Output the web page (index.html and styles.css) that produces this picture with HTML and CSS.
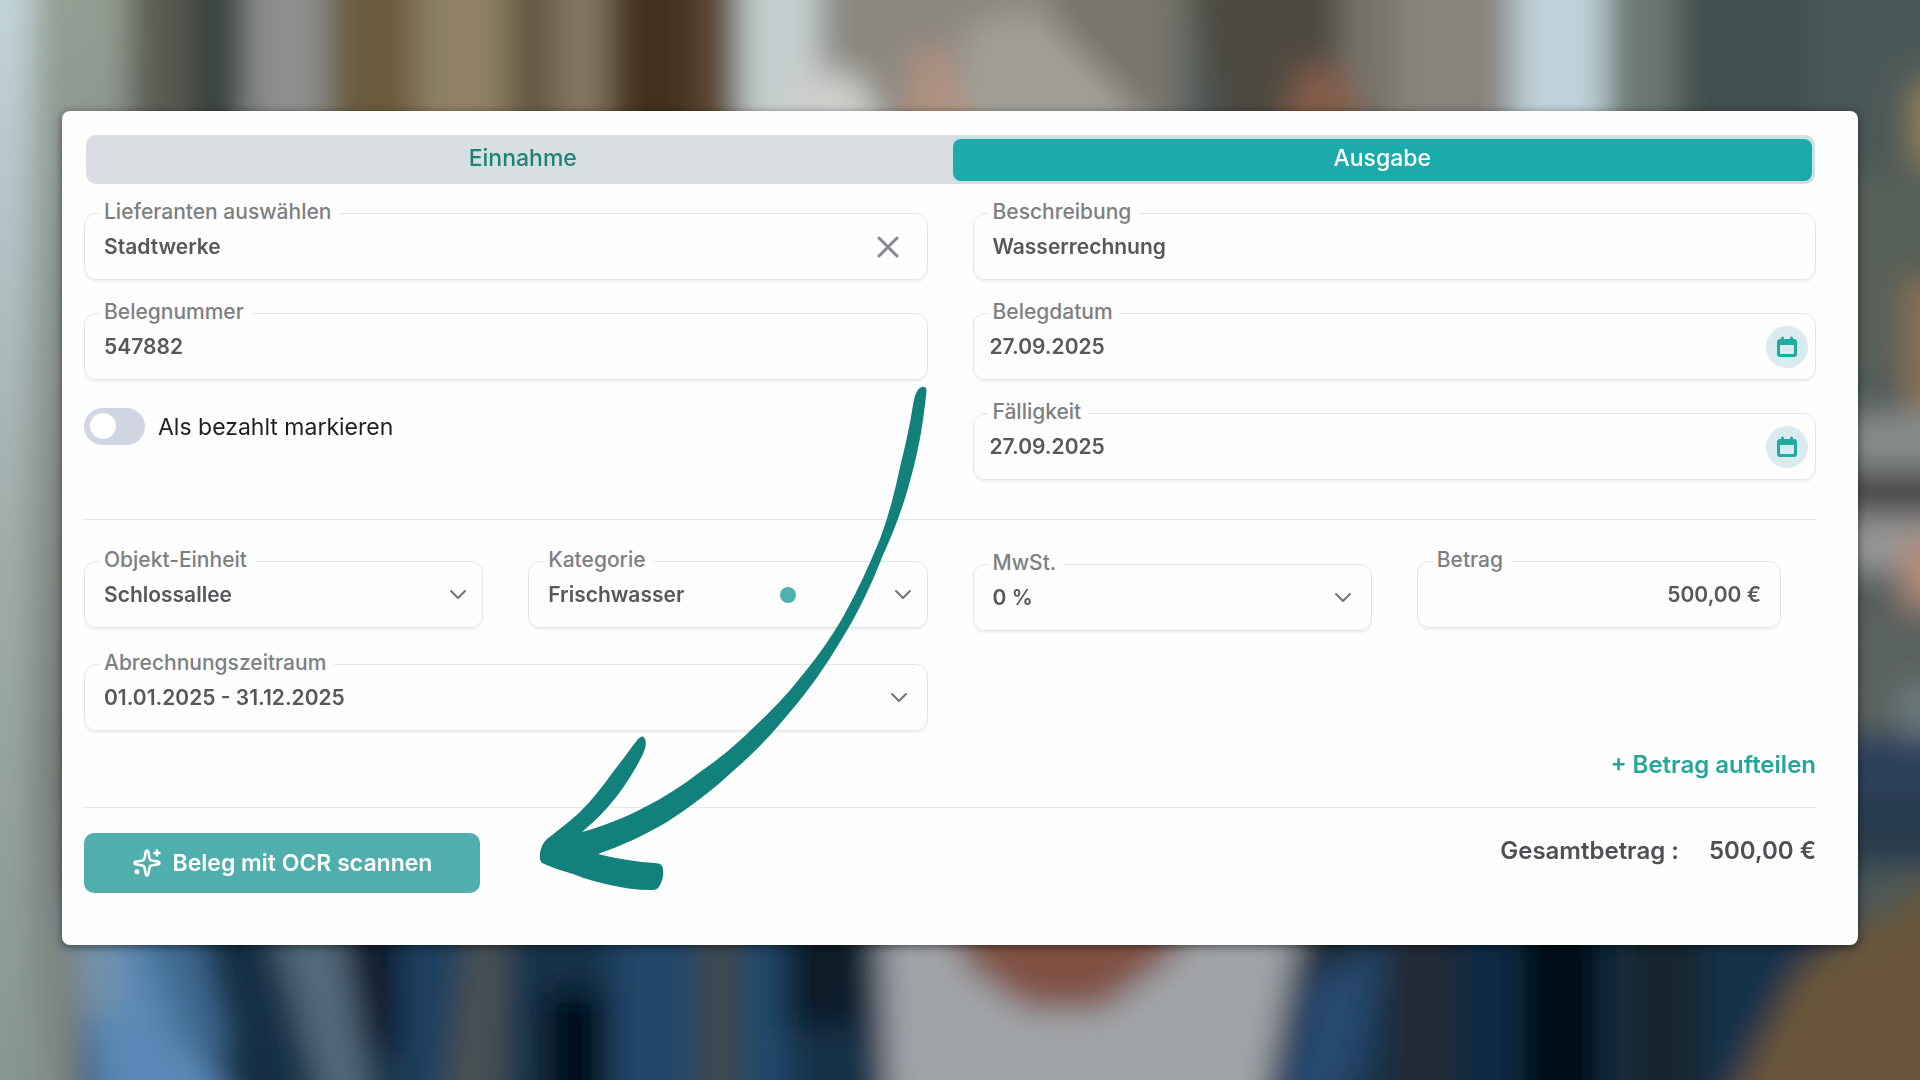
FILE: index.html
```
<!DOCTYPE html>
<html lang="de">
<head>
  <meta charset="UTF-8">
  <meta name="viewport" content="width=device-width, initial-scale=1">
  <title>Beleg erfassen</title>
  <link rel="stylesheet" href="styles.css">
</head>
<body>

  <svg class="backdrop" viewBox="0 0 1568 882" preserveAspectRatio="none" aria-hidden="true">
    <defs>
      <filter id="soft" x="-10%" y="-10%" width="120%" height="120%">
        <feGaussianBlur stdDeviation="13"/>
      </filter>
      <linearGradient id="wall" x1="0" y1="0" x2="0" y2="1">
        <stop offset="0" stop-color="#c6dae0"/>
        <stop offset="0.5" stop-color="#a0adab"/>
        <stop offset="1" stop-color="#84948f"/>
      </linearGradient>
      <linearGradient id="curtain" x1="0" y1="0" x2="0" y2="1">
        <stop offset="0" stop-color="#98a195"/>
        <stop offset="0.3" stop-color="#87918c"/>
        <stop offset="0.7" stop-color="#757a74"/>
        <stop offset="1" stop-color="#848e8a"/>
      </linearGradient>
    </defs>
    <rect width="1568" height="882" fill="#4b5858"/>
    <g filter="url(#soft)">
      <!-- curtains and shelf -->
      <rect x="-60" y="-60" width="88" height="1000" fill="url(#wall)"/>
      <rect x="28" y="-60" width="80" height="1000" fill="url(#curtain)"/>
      <rect x="105" y="-60" width="52" height="400" fill="#5a5b53"/>
      <rect x="155" y="-60" width="47" height="400" fill="#39433d"/>
      <rect x="200" y="-60" width="68" height="400" fill="#8c8f8b"/>
      <rect x="268" y="-60" width="72" height="400" fill="#6b5c3e"/>
      <rect x="340" y="-60" width="74" height="400" fill="#908165"/>
      <rect x="414" y="-60" width="40" height="400" fill="#625844"/>
      <rect x="454" y="-60" width="44" height="400" fill="#84775f"/>
      <rect x="498" y="-60" width="70" height="400" fill="#42331a"/>
      <rect x="568" y="-60" width="36" height="400" fill="#5f4a30"/>
      <rect x="604" y="-60" width="66" height="400" fill="#c4cfcf"/>
      <!-- head -->
      <rect x="670" y="-60" width="200" height="400" fill="#8b8780"/>
      <rect x="860" y="-60" width="110" height="400" fill="#77746c"/>
      <polygon points="790,20 850,10 900,60 960,130 780,130" fill="#a19f98"/>
      <polygon points="650,60 700,60 735,130 640,130" fill="#cfcfcc"/>
      <polygon points="745,40 775,40 800,130 735,130" fill="#b0917f"/>
      <polygon points="965,-60 1095,-60 1120,130 1000,130" fill="#4d4841"/>
      <rect x="1095" y="-60" width="50" height="400" fill="#77736b"/>
      <rect x="1140" y="-60" width="92" height="400" fill="#88847b"/>
      <polygon points="1060,55 1100,55 1125,140 1040,140" fill="#835d4a"/>
      <rect x="1234" y="-60" width="78" height="400" fill="#c0d2da"/>
      <rect x="1312" y="-60" width="57" height="400" fill="#6b7872"/>
      <rect x="1369" y="-60" width="110" height="400" fill="#43504f"/>
      <!-- right edge -->
      <polygon points="1560,70 1640,50 1640,150 1560,130" fill="#9c8557"/>
      <rect x="1500" y="140" width="140" height="170" fill="#566059"/>
      <rect x="1555" y="230" width="85" height="110" fill="#8d7052"/>
      <rect x="1500" y="335" width="140" height="50" fill="#858b89"/>
      <rect x="1500" y="388" width="140" height="30" fill="#3d3635"/>
      <rect x="1500" y="420" width="140" height="50" fill="#949695"/>
      <rect x="1552" y="440" width="90" height="60" fill="#b58b78"/>
      <rect x="1500" y="495" width="140" height="100" fill="#5a625f"/>
      <rect x="1550" y="560" width="90" height="60" fill="#6d7b80"/>
      <rect x="1500" y="600" width="140" height="60" fill="#29405a"/>
      <rect x="1500" y="655" width="140" height="50" fill="#253b4b"/>
      <!-- checked shirt -->
      <rect x="64" y="700" width="1440" height="240" fill="#17304a"/>
      <polygon points="56,730 104,730 215,960 86,960" fill="#5a88b6"/>
      <polygon points="60,730 98,730 98,830 68,830" fill="#7593a8"/>
      <polygon points="105,730 155,730 195,860 150,860" fill="#3f6a92"/>
      <polygon points="155,730 200,730 250,960 210,960" fill="#142d45"/>
      <polygon points="215,730 275,730 312,960 282,960" fill="#526a7c"/>
      <polygon points="275,730 325,730 325,860 300,860" fill="#0b1826"/>
      <polygon points="325,730 420,730 415,960 330,960" fill="#1e3f5f"/>
      <polygon points="385,730 415,730 410,960 355,960" fill="#4a5152"/>
      <rect x="445" y="810" width="50" height="150" fill="#020d17"/>
      <rect x="500" y="730" width="70" height="230" fill="#204669"/>
      <rect x="570" y="730" width="33" height="230" fill="#414c4e"/>
      <rect x="605" y="730" width="38" height="230" fill="#23496c"/>
      <rect x="640" y="730" width="65" height="110" fill="#0f1d26"/>
      <polygon points="718,730 1066,730 1020,960 728,960" fill="#a0a4a9"/>
      <polygon points="755,710 988,710 960,780 900,825 840,825 790,790" fill="#805142"/>
      <polygon points="1072,730 1140,730 1110,780 1066,800" fill="#1f2b33"/>
      <polygon points="1070,800 1130,770 1110,880 1030,960" fill="#274a6e"/>
      <rect x="1135" y="730" width="55" height="230" fill="#202a34"/>
      <rect x="1190" y="730" width="45" height="230" fill="#112b45"/>
      <rect x="1240" y="730" width="70" height="230" fill="#020f15"/>
      <rect x="1325" y="730" width="65" height="230" fill="#18282f"/>
      <polygon points="1640,680 1540,745 1470,790 1380,960 1640,960" fill="#69573a"/>
    </g>
  </svg>

  <main class="card">
    <form>
      <div class="tabs">
        <button type="button" class="tab">Einnahme</button>
        <button type="button" class="tab active">Ausgabe</button>
      </div>

      <div class="columns">
        <div class="column">
          <div class="field">
            <label for="supplier">Lieferanten auswählen</label>
            <input type="text" id="supplier" value="Stadtwerke">
            <button type="button" class="clear" aria-label="Auswahl löschen">
              <svg width="22" height="22" viewBox="0 0 22 22"><path d="M2 2l18 18M20 2L2 20"/></svg>
            </button>
          </div>
          <div class="field">
            <label for="number">Belegnummer</label>
            <input type="text" id="number" value="547882">
          </div>
          <div class="toggle">
            <input type="checkbox" id="paid">
            <label for="paid">Als bezahlt markieren</label>
          </div>
        </div>

        <div class="column">
          <div class="field">
            <label for="description">Beschreibung</label>
            <input type="text" id="description" value="Wasserrechnung">
          </div>
          <div class="field date">
            <label for="date">Belegdatum</label>
            <input type="text" id="date" value="27.09.2025">
            <button type="button" class="calendar" aria-label="Belegdatum wählen">
              <svg width="22" height="22" viewBox="0 0 22 22"><path fill-rule="evenodd" d="M5 2a1 1 0 0 1 3 0v1h6V2a1 1 0 0 1 3 0v1h1a3 3 0 0 1 3 3v12a3 3 0 0 1-3 3H4a3 3 0 0 1-3-3V6a3 3 0 0 1 3-3h1zM4 9v8q0 1 1 1h12q1 0 1-1V9z"/></svg>
            </button>
          </div>
          <div class="field date">
            <label for="due">Fälligkeit</label>
            <input type="text" id="due" value="27.09.2025">
            <button type="button" class="calendar" aria-label="Fälligkeit wählen">
              <svg width="22" height="22" viewBox="0 0 22 22"><path fill-rule="evenodd" d="M5 2a1 1 0 0 1 3 0v1h6V2a1 1 0 0 1 3 0v1h1a3 3 0 0 1 3 3v12a3 3 0 0 1-3 3H4a3 3 0 0 1-3-3V6a3 3 0 0 1 3-3h1zM4 9v8q0 1 1 1h12q1 0 1-1V9z"/></svg>
            </button>
          </div>
        </div>
      </div>

      <hr>

      <div class="position">
        <div class="field">
          <label for="unit">Objekt-Einheit</label>
          <select id="unit"><option>Schlossallee</option></select>
          <svg class="chevron" width="18" height="12" viewBox="0 0 18 12"><path d="M2 2l7 7 7-7"/></svg>
        </div>
        <div class="field">
          <label for="category">Kategorie</label>
          <select id="category"><option>Frischwasser</option></select>
          <span class="dot"></span>
          <svg class="chevron" width="18" height="12" viewBox="0 0 18 12"><path d="M2 2l7 7 7-7"/></svg>
        </div>
        <div class="field vat">
          <label for="vat">MwSt.</label>
          <select id="vat"><option>0 %</option></select>
          <svg class="chevron" width="18" height="12" viewBox="0 0 18 12"><path d="M2 2l7 7 7-7"/></svg>
        </div>
        <div class="field amount">
          <label for="amount">Betrag</label>
          <input type="text" id="amount" value="500,00 €">
        </div>
        <div class="field period">
          <label for="period">Abrechnungszeitraum</label>
          <select id="period"><option>01.01.2025 - 31.12.2025</option></select>
          <svg class="chevron" width="18" height="12" viewBox="0 0 18 12"><path d="M2 2l7 7 7-7"/></svg>
        </div>
      </div>

      <div class="split">
        <a href="#">+ Betrag aufteilen</a>
      </div>

      <hr>

      <div class="footer">
        <button type="button" class="scan">
          <svg width="30" height="30" viewBox="0 0 24 24">
            <path d="M11.017 2.814a1 1 0 0 1 1.966 0l1.051 5.558a2 2 0 0 0 1.594 1.594l5.558 1.051a1 1 0 0 1 0 1.966l-5.558 1.051a2 2 0 0 0-1.594 1.594l-1.051 5.558a1 1 0 0 1-1.966 0l-1.051-5.558a2 2 0 0 0-1.594-1.594l-5.558-1.051a1 1 0 0 1 0-1.966l5.558-1.051a2 2 0 0 0 1.594-1.594z"/>
            <path d="M20 2v4M22 4h-4"/>
            <circle cx="4" cy="19" r="1"/>
          </svg>
          Beleg mit OCR scannen
        </button>
        <div class="total">
          <span>Gesamtbetrag :</span>
          <span>500,00 €</span>
        </div>
      </div>
    </form>

    <svg class="arrow" width="388" height="506" viewBox="539 386 388 506" aria-hidden="true">
      <path d="M926 396C923 425 918 453 910 481C903 507 894 531 883 555C871 586 857 615 840 642C825 667 809 690 790 712C773 733 754 753 733 771C713 790 690 807 667 822C645 835 621 846 598 854C618 859 638 862 655 863Q663 863 663 870C664 876 662 881 660 885Q658 890 652 890C637 890 623 888 610 885C597 882 585 879 573 874C562 871 551 867 542 863Q539 860 540 853C541 847 543 843 547 839C558 830 569 822 580 812C592 800 603 786 613 772C622 761 630 749 638 739Q643 734 645 739C647 744 645 750 642 756C635 770 626 784 617 796C606 810 595 821 582 832C603 826 624 818 643 808C663 798 682 786 700 772C719 759 737 744 753 728C770 712 786 696 800 678C816 659 830 639 843 617C857 592 869 566 880 539C889 515 895 491 900 467C905 447 910 425 913 405C914 397 917 388 922 387C927 386 927 390 926 396Z"/>
    </svg>
  </main>

</body>
</html>
```
FILE: styles.css
```
* {
  box-sizing: border-box;
}
body {
  margin: 0;
  min-height: 100vh;
  padding: 111px 62px;
  font-family: Inter, "Liberation Sans", sans-serif;
  font-size: 21px;
  font-weight: 500;
  color: #55585c;
}
.backdrop {
  position: fixed;
  inset: 0;
  width: 100%;
  height: 100%;
  z-index: -1;
}
.card {
  position: relative;
  padding: 24px 42px 52px 22px;
  border-radius: 8px;
  background-color: #fefefe;
  box-shadow: 0 2px 10px rgba(0, 0, 0, 0.5);
}
button, input, select {
  font: inherit;
  color: inherit;
  border: none;
  background: none;
  padding: 0;
}
button {
  cursor: pointer;
}
.tabs {
  display: flex;
  height: 49px;
  margin: 0 1px 0 2px;
  padding: 4px 3px 3px 7px;
  border-radius: 10px;
  background-color: #dadde1;
}
.tab {
  flex: 1;
  padding-bottom: 5px;
  border-radius: 8px;
  font-size: 23px;
  color: #1a8476;
}
.tab.active {
  background-color: #1cabab;
  color: white;
  box-shadow: 0 0 0 3px #d0dfe4;
}
.columns {
  display: grid;
  grid-template-columns: 1fr 1fr;
  column-gap: 45px;
  margin-top: 29px;
}
.field {
  position: relative;
  display: flex;
  align-items: center;
  height: 67px;
  padding: 0 19px;
  border: 1px solid #e3e5e8;
  border-radius: 12px;
  box-shadow: 0 2px 2px rgba(0, 0, 0, 0.06);
}
.column .field + .field {
  margin-top: 33px;
}
.field label {
  position: absolute;
  top: -16px;
  left: 14px;
  padding: 0 8px 0 5px;
  line-height: 28px;
  color: #7d7f82;
  background-color: #fefefe;
}
.field input, .field select {
  flex: 1;
  min-width: 0;
  height: 40px;
  font-weight: 600;
  appearance: none;
}
.field.date {
  padding: 0 7px 0 16px;
}
.clear {
  width: 40px;
  height: 40px;
}
.clear svg {
  display: block;
  margin: auto;
  stroke: #85888e;
  stroke-width: 3;
  stroke-linecap: round;
}
.calendar {
  width: 42px;
  height: 42px;
  border-radius: 50%;
  background-color: #d9ebee;
}
.calendar svg {
  display: block;
  margin: auto;
  fill: #22aaa0;
}
.chevron {
  fill: none;
  stroke: #707377;
  stroke-width: 2;
  stroke-linecap: round;
  stroke-linejoin: round;
}
.toggle {
  display: flex;
  align-items: center;
  gap: 13px;
  margin-top: 28px;
  font-size: 23px;
  font-weight: 400;
  color: #1d1f21;
}
.toggle input {
  appearance: none;
  width: 61px;
  height: 37px;
  margin: 0;
  padding: 5px 6px;
  border-radius: 19px;
  background-color: #cfd5e1;
}
.toggle input::before {
  content: "";
  display: block;
  width: 26px;
  height: 26px;
  border-radius: 50%;
  background-color: white;
}
.toggle input:checked {
  background-color: #1cabab;
}
.toggle input:checked::before {
  margin-left: auto;
}
hr {
  height: 1px;
  margin: 39px 0 0;
  border: none;
  background-color: #e6e7e9;
}
.position {
  display: grid;
  grid-template-columns: repeat(4, minmax(0, 1fr));
  gap: 36px 45px;
  margin-top: 41px;
}
.position .field {
  padding-right: 15px;
}
.dot {
  width: 16px;
  height: 16px;
  margin-right: 98px;
  border-radius: 50%;
  background-color: #4fb1ae;
}
.vat {
  margin: 3px 0 -3px;
}
.amount {
  margin-right: 35px;
}
.position .amount, .position .period, .position .vat {
  padding-right: 19px;
}
.amount input {
  text-align: right;
}
.period {
  grid-column: span 2;
}
.split {
  margin-top: 20px;
  text-align: right;
  font-size: 24px;
  font-weight: 600;
  line-height: 28px;
}
.split a {
  color: #26a69a;
  text-decoration: none;
}
.split + hr {
  margin-top: 28px;
}
.footer {
  display: flex;
  justify-content: space-between;
  align-items: flex-start;
  margin-top: 25px;
}
.scan {
  display: flex;
  align-items: center;
  justify-content: center;
  gap: 11px;
  width: 396px;
  height: 60px;
  border-radius: 10px;
  background-color: #50afac;
  color: white;
  font-size: 23px;
  font-weight: 600;
}
.scan svg {
  fill: none;
  stroke: white;
  stroke-width: 2;
  stroke-linecap: round;
  stroke-linejoin: round;
}
.total {
  display: flex;
  gap: 30px;
  margin-top: 4px;
  font-size: 24px;
  font-weight: 600;
  line-height: 28px;
  color: #4c4f54;
}
.arrow {
  position: absolute;
  top: 275px;
  left: 477px;
  fill: #12807b;
  pointer-events: none;
}
```
